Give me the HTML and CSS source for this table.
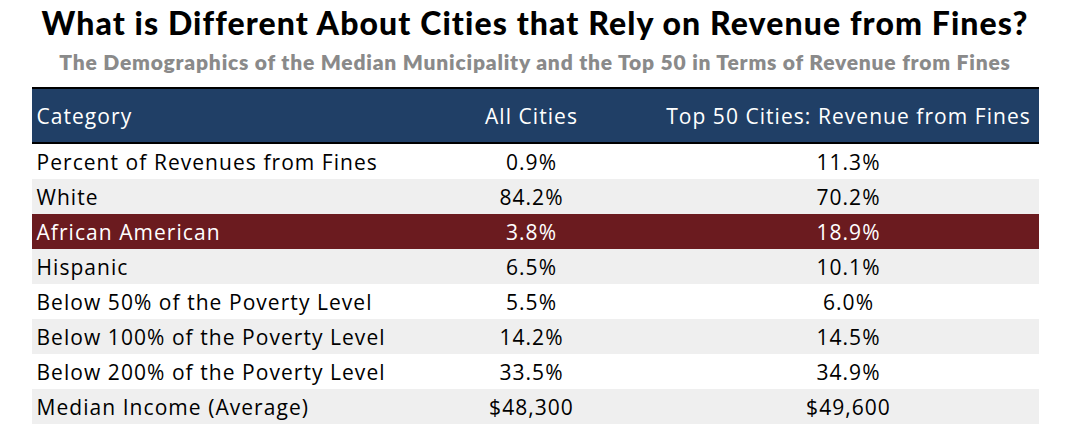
FILE: index.html
```html
<!DOCTYPE html>
<html>
<head>
<meta charset="utf-8">
<link rel="stylesheet" href="styles.css">
</head>
<body>
<div class="page">
  <h1 class="title">What is Different About Cities that Rely on Revenue from Fines?</h1>
  <h2 class="subtitle">The Demographics of the Median Municipality and the Top 50 in Terms of Revenue from Fines</h2>
  <table class="data">
    <thead>
      <tr><th class="cat">Category</th><th>All Cities</th><th>Top 50 Cities: Revenue from Fines</th></tr>
    </thead>
    <tbody>
      <tr><td class="cat">Percent of Revenues from Fines</td><td>0.9%</td><td>11.3%</td></tr>
      <tr class="alt"><td class="cat">White</td><td>84.2%</td><td>70.2%</td></tr>
      <tr class="hl"><td class="cat">African American</td><td>3.8%</td><td>18.9%</td></tr>
      <tr class="alt"><td class="cat">Hispanic</td><td>6.5%</td><td>10.1%</td></tr>
      <tr><td class="cat">Below 50% of the Poverty Level</td><td>5.5%</td><td>6.0%</td></tr>
      <tr class="alt"><td class="cat">Below 100% of the Poverty Level</td><td>14.2%</td><td>14.5%</td></tr>
      <tr><td class="cat">Below 200% of the Poverty Level</td><td>33.5%</td><td>34.9%</td></tr>
      <tr class="alt"><td class="cat">Median Income (Average)</td><td>$48,300</td><td>$49,600</td></tr>
    </tbody>
  </table>
</div>
</body>
</html>
```
FILE: styles.css
```css
html, body {
  margin: 0;
  padding: 0;
  background: #ffffff;
}
.page {
  width: 1070px;
  display: flex;
  flex-direction: column;
  align-items: center;
  font-family: "Lato", "Noto Sans", sans-serif;
}
.title {
  margin: 3px 0 0 0;
  font-size: 32px;
  line-height: 40px;
  font-weight: 900;
  letter-spacing: 1.1px;
  color: #000;
  white-space: nowrap;
}
.subtitle {
  margin: 6px 0 0 0;
  font-size: 21px;
  line-height: 26px;
  font-weight: 800;
  letter-spacing: 0.8px;
  color: #8a8a8a;
  white-space: nowrap;
}
.data {
  margin-top: 12px;
  width: 1007px;
  border-collapse: collapse;
  font-family: "Open Sans", "Lato", sans-serif;
  font-size: 21px;
  letter-spacing: 1.05px;
  color: #000;
}
.data th {
  background: #203f66;
  color: #fff;
  font-weight: 400;
  height: 53px;
  padding: 0;
  text-align: center;
  border-top: 2px solid #000;
  border-bottom: 2px solid #000;
}
.data th:nth-child(1) { width: 368px; }
.data th:nth-child(2) { width: 254px; }
.data td {
  height: 35px;
  padding: 0;
  text-align: center;
}
.data .cat {
  text-align: left;
  padding-left: 5px;
}
.alt td { background: #efefef; }
.hl td { background: #6b1b1f; color: #fff; }
```
